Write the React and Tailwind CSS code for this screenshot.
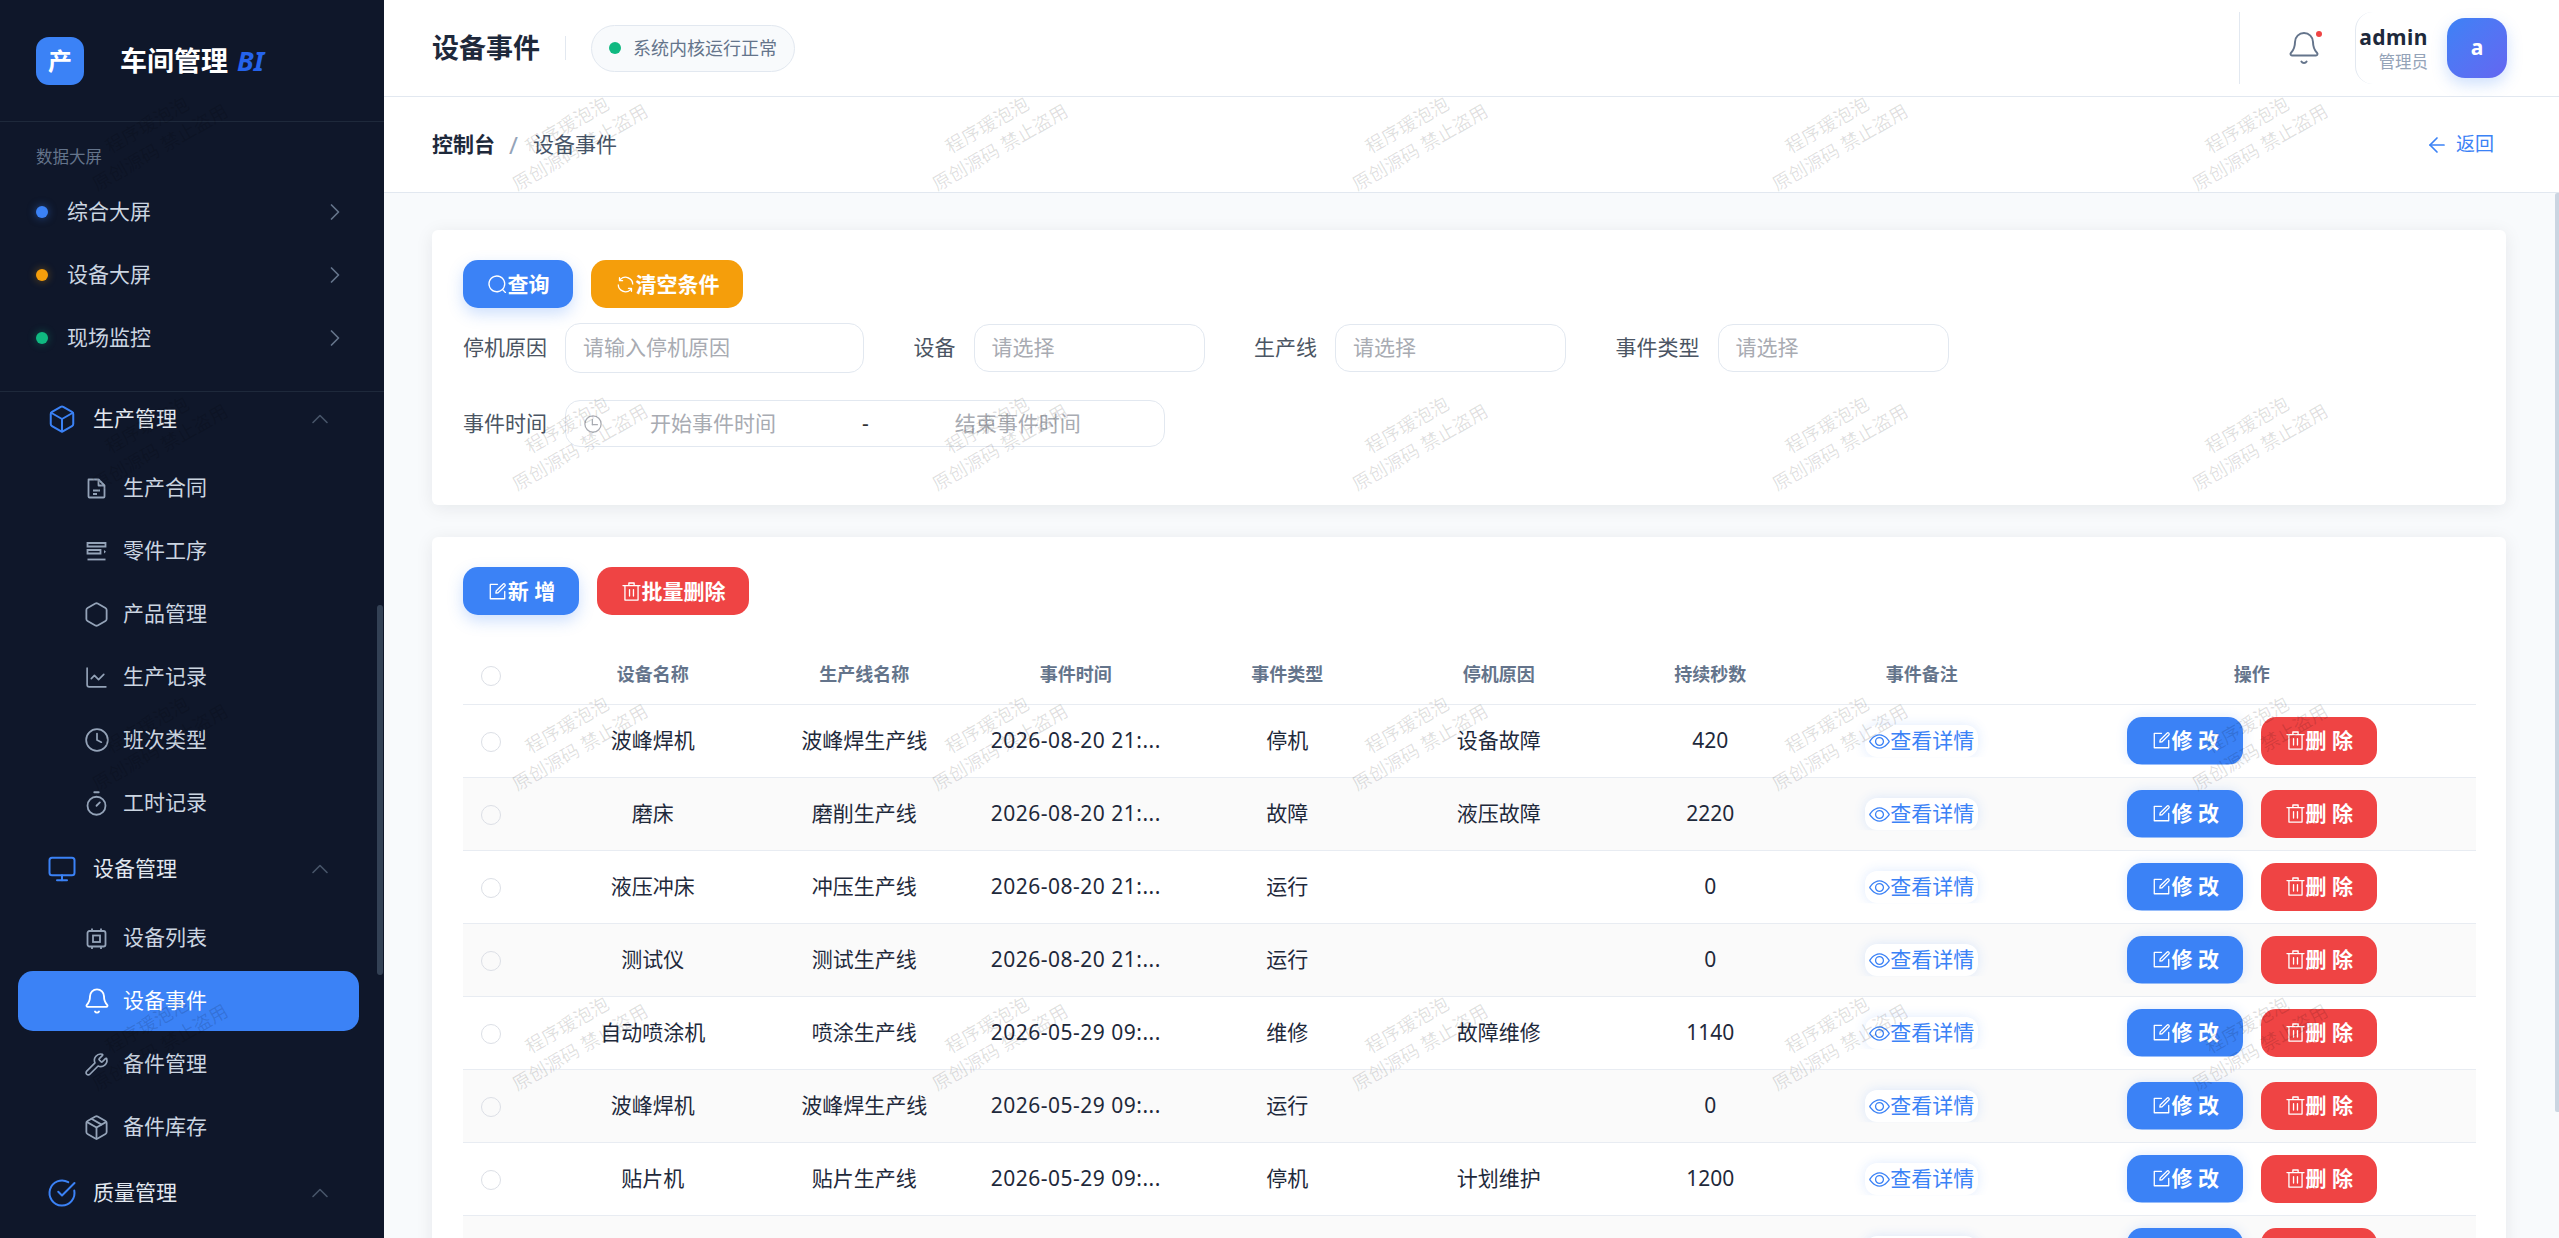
import {
  Box, Hexagon, ChartLine, Clock, Timer, Monitor, Bell, Wrench, Package,
  CircleCheckBig, ChevronRight, ChevronUp, ArrowLeft,
} from 'lucide-react';

// Element style icons, 1024 grid
const EP = ({ d, className }) => (
  <svg viewBox="0 0 1024 1024" fill="currentColor" className={className}>
    {d.map((p, i) => <path key={i} d={p} />)}
  </svg>
);
const searchPath = ['m795.904 750.72 124.992 124.928a32 32 0 0 1-45.248 45.248L750.656 795.904a416 416 0 1 1 45.248-45.248zM480 832a352 352 0 1 0 0-704 352 352 0 0 0 0 704z'];
const refreshPath = ['M771.776 794.88A384 384 0 0 1 128 512h64a320 320 0 0 0 555.712 216.448H654.72a32 32 0 1 1 0-64h149.056a32 32 0 0 1 32 32v148.928a32 32 0 1 1-64 0v-50.56zM276.288 295.616h92.992a32 32 0 0 1 0 64H220.16a32 32 0 0 1-32-32V178.56a32 32 0 0 1 64 0v50.56A384 384 0 0 1 896.128 512h-64a320 320 0 0 0-555.776-216.384z'];
const editPath = [
  'M832 512a32 32 0 1 1 64 0v352a32 32 0 0 1-32 32H160a32 32 0 0 1-32-32V160a32 32 0 0 1 32-32h352a32 32 0 0 1 0 64H192v640h640V512z',
  'm469.952 554.24 52.8-7.552L847.104 222.4a32 32 0 1 0-45.248-45.248L477.44 501.44l-7.552 52.8zm422.4-422.4a96 96 0 0 1 0 135.808l-331.84 331.84a32 32 0 0 1-18.112 9.088L436.8 623.68a32 32 0 0 1-36.224-36.224l15.104-105.6a32 32 0 0 1 9.024-18.112l331.904-331.84a96 96 0 0 1 135.744 0z',
];
const deletePath = ['M160 256H96a32 32 0 0 1 0-64h256V95.936a32 32 0 0 1 32-32h256a32 32 0 0 1 32 32V192h256a32 32 0 1 1 0 64h-64v672a32 32 0 0 1-32 32H192a32 32 0 0 1-32-32V256zm448-64v-64H416v64h192zM224 896h576V256H224v640zm192-128a32 32 0 0 1-32-32V416a32 32 0 0 1 64 0v320a32 32 0 0 1-32 32zm192 0a32 32 0 0 1-32-32V416a32 32 0 0 1 64 0v320a32 32 0 0 1-32 32z'];
const viewPath = ['M512 160c320 0 512 352 512 352S832 864 512 864 0 512 0 512s192-352 512-352zm0 64c-225.28 0-384.128 208.064-436.8 288 52.608 79.872 211.456 288 436.8 288 225.28 0 384.128-208.064 436.8-288-52.608-79.872-211.456-288-436.8-288zm0 64a224 224 0 1 1 0 448 224 224 0 0 1 0-448zm0 64a160.192 160.192 0 0 0-160 160c0 88.192 71.744 160 160 160s160-71.808 160-160-71.744-160-160-160z'];
const clockPath = [
  'M512 896a384 384 0 1 0 0-768 384 384 0 0 0 0 768zm0 64a448 448 0 1 1 0-896 448 448 0 0 1 0 896z',
  'M480 256a32 32 0 0 1 32 32v256a32 32 0 0 1-64 0V288a32 32 0 0 1 32-32z',
  'M480 512h256q32 0 32 32t-32 32H480q-32 0-32-32t32-32z',
];

// sidebar icons that lucide has no close match for
const DocIcon = ({ className }) => (
  <svg viewBox="0 0 21 21" fill="none" stroke="currentColor" strokeWidth="1.8" strokeLinejoin="round" className={className}>
    <path d="M2.5 1.5h10l6 6v11a1 1 0 0 1-1 1h-14a1 1 0 0 1-1-1v-16a1 1 0 0 1 1-1z" />
    <path d="M12.5 1.5v6h6" />
    <path d="M7 12.5h7M7 16h4" />
  </svg>
);
const StepsIcon = ({ className }) => (
  <svg viewBox="0 0 21 21" fill="none" stroke="currentColor" strokeWidth="1.8" className={className}>
    <path d="M1.5 2h18v3.5h-18z" />
    <path d="M1.5 9h13v3.5h-13z" />
    <path d="M1.5 18.5h18" />
    <path d="M18 9l2 1.7-2 1.7z" fill="currentColor" stroke="none" />
  </svg>
);
const ChipIcon = ({ className }) => (
  <svg viewBox="0 0 21 21" fill="none" stroke="currentColor" strokeWidth="1.8" className={className}>
    <rect x="1.5" y="3" width="18" height="15.5" rx="2" />
    <rect x="7" y="7.5" width="7" height="6.5" />
    <path d="M6 .5V3M15 .5V3M6 18.5V21M15 18.5V21" />
  </svg>
);

const groups = [
  {
    title: '生产管理', Icon: Box,
    items: [
      ['生产合同', DocIcon, 'w-[21px] h-[21px]'], ['零件工序', StepsIcon, 'w-[21px] h-[21px]'], ['产品管理', Hexagon, 'w-[27px] h-[27px]'],
      ['生产记录', ChartLine, 'w-[25px] h-[25px]'], ['班次类型', Clock, 'w-[26px] h-[26px]'], ['工时记录', Timer, 'w-[27px] h-[27px]'],
    ],
  },
  {
    title: '设备管理', Icon: Monitor,
    items: [
      ['设备列表', ChipIcon, 'w-[21px] h-[21px]'], ['设备事件', Bell, 'w-[28px] h-[28px]', true],
      ['备件管理', Wrench, 'w-[25px] h-[25px]'], ['备件库存', Package, 'w-[27px] h-[27px]'],
    ],
  },
  { title: '质量管理', Icon: CircleCheckBig, items: [] },
];

const rows = [
  ['波峰焊机', '波峰焊生产线', '2026-08-20 21:...', '停机', '设备故障', '420'],
  ['磨床', '磨削生产线', '2026-08-20 21:...', '故障', '液压故障', '2220'],
  ['液压冲床', '冲压生产线', '2026-08-20 21:...', '运行', '', '0'],
  ['测试仪', '测试生产线', '2026-08-20 21:...', '运行', '', '0'],
  ['自动喷涂机', '喷涂生产线', '2026-05-29 09:...', '维修', '故障维修', '1140'],
  ['波峰焊机', '波峰焊生产线', '2026-05-29 09:...', '运行', '', '0'],
  ['贴片机', '贴片生产线', '2026-05-29 09:...', '停机', '计划维护', '1200'],
  ['', '', '', '', '', ''],
];

const Btn = ({ icon, label, className }) => (
  <button className={`h-12 rounded-[15px] flex items-center justify-center text-white text-[21px] font-bold leading-none ${className}`}>
    <EP d={icon} className="w-[21px] h-[21px] shrink-0" />
    <span>{label}</span>
  </button>
);

const Field = ({ label, placeholder, width, height = 'h-12' }) => (
  <div className="flex items-center gap-[18px]">
    <span className="text-[21px] text-[#4b5563]">{label}</span>
    <div className={`${width} ${height} rounded-[15px] border border-[#e2e8f0] bg-white flex items-center pl-[17px] text-[21px] text-[#a8abb2]`}>
      {placeholder}
    </div>
  </div>
);

function Sidebar() {
  return (
    <aside className="relative w-[384px] h-full shrink-0 bg-[#0f172a] flex flex-col overflow-hidden">
      <div className="h-[122px] shrink-0 border-b border-[#1e293b] flex items-center pl-9">
        <div className="w-12 h-12 rounded-[13px] bg-[#3b82f6] flex items-center justify-center text-white text-[24px] font-bold">产</div>
        <div className="ml-9 mt-[2px] text-white text-[27px] font-bold">车间管理</div>
        <div className="ml-[9px] mt-[2px] text-[#2563eb] text-[27px] font-bold italic">BI</div>
      </div>
      <div className="h-[270px] shrink-0 border-b border-[#1e293b] pt-[23px]">
        <div className="pl-9 text-[16.5px] leading-6 text-[#64748b]">数据大屏</div>
        <div className="mt-[11px] flex flex-col">
          {[['综合大屏', 'bg-[#3b82f6] shadow-[0_0_9px_rgba(59,130,246,.5)]'], ['设备大屏', 'bg-[#f59e0b] shadow-[0_0_9px_rgba(245,158,11,.4)]'], ['现场监控', 'bg-[#10b981] shadow-[0_0_9px_rgba(16,185,129,.4)]']].map(([t, dot]) => (
            <div key={t} className="h-[63px] flex items-center pl-9 pr-[35px]">
              <span className={`w-3 h-3 rounded-full ${dot}`} />
              <span className="ml-[19px] text-[21px] text-[#cbd5e1]">{t}</span>
              <ChevronRight className="ml-auto w-7 h-7 text-[#64748b]" strokeWidth={1.5} />
            </div>
          ))}
        </div>
      </div>
      <nav className="flex-1 overflow-hidden pl-[18px] pr-[25px]">
        {groups.map(({ title, Icon, items }) => (
          <div key={title}>
            <div className="h-[54px] flex items-center pl-[31px] pr-[25px]">
              <span className="w-[25px] flex justify-center shrink-0">
                <Icon className="w-[30px] h-[30px] shrink-0 text-[#3b82f6]" strokeWidth={1.6} />
              </span>
              <span className="ml-[19px] text-[21px] text-[#e2e8f0]">{title}</span>
              <ChevronUp className="ml-auto w-7 h-7 text-[#475569]" strokeWidth={1.4} />
            </div>
            {items.length > 0 && (
              <div className="mt-[12px] mb-[9px] flex flex-col gap-[3px]">
                {items.map(([t, ItemIcon, size, active]) => (
                  <div key={t} className={`h-[60px] flex items-center pl-[68px] rounded-[15px] ${active ? 'bg-[#3b82f6] text-white' : 'text-[#cbd5e1]'}`}>
                    <span className="w-[21px] flex justify-center shrink-0">
                      <ItemIcon className={`${size} shrink-0 ${active ? 'text-white' : 'text-[#94a3b8]'}`} strokeWidth={1.6} />
                    </span>
                    <span className="ml-[16px] text-[21px]">{t}</span>
                  </div>
                ))}
              </div>
            )}
          </div>
        ))}
      </nav>
      {/* thin scrollbar thumb */}
      <div className="absolute left-[377px] top-[605px] w-[6px] h-[370px] rounded-full bg-[#334155]" />
    </aside>
  );
}

function Topbar() {
  return (
    <header className="h-[97px] shrink-0 bg-white border-b border-[#e2e8f0] flex items-center pl-12 pr-[52px]">
      <h1 className="text-[27px] font-bold text-[#1e293b]">设备事件</h1>
      <div className="ml-[25px] w-px h-6 bg-[#e2e8f0]" />
      <div className="ml-[25px] h-[47px] w-[204px] rounded-full bg-[#f8fafc] border border-[#e2e8f0] flex items-center pl-[17px]">
        <span className="w-3 h-3 rounded-full bg-[#10b981]" />
        <span className="ml-3 text-[18px] text-[#64748b]">系统内核运行正常</span>
      </div>
      <div className="ml-auto w-px h-[72px] bg-[#e2e8f0]" />
      <div className="relative ml-[46px] w-9 flex justify-center">
        <Bell className="w-9 h-9 text-[#64748b]" strokeWidth={1.3} />
        <span className="absolute right-0 top-[1px] w-[6px] h-[6px] rounded-full bg-[#ef4444]" />
      </div>
      <div className="ml-[33px] h-[72px] w-[73px] rounded-l-[18px] border-l border-[#e2e8f0] flex flex-col items-end justify-center">
        <div className="text-[21px] leading-[27px] font-bold text-[#1e293b] tracking-[0.5px]">admin</div>
        <div className="text-[16.5px] leading-[22px] text-[#94a3b8]">管理员</div>
      </div>
      <div className="ml-[19px] w-[60px] h-[60px] rounded-[18px] bg-gradient-to-br from-[#3b82f6] to-[#6366f1] flex items-center justify-center text-white font-bold text-[21px] shadow-[0_6px_15px_rgba(59,130,246,.25)]">a</div>
    </header>
  );
}

function Crumbs() {
  return (
    <div className="h-[96px] shrink-0 bg-white border-b border-[#e2e8f0] flex items-center pl-12 pr-[65px]">
      <span className="text-[21px] font-bold text-[#1e293b]">控制台</span>
      <span className="ml-[14px] text-[24px] text-[#94a3b8]">/</span>
      <span className="ml-[15px] text-[21px] text-[#475569]">设备事件</span>
      <div className="ml-auto flex items-center text-[#3b82f6]">
        <ArrowLeft className="w-6 h-6" strokeWidth={1.7} />
        <span className="ml-[7px] text-[19px]">返回</span>
      </div>
    </div>
  );
}

function Filters() {
  return (
    <section className="bg-white rounded-[6px] shadow-[0_3px_18px_rgba(15,23,42,.08)] h-[275px] pt-[30px] px-[31px]">
      <div className="flex gap-[18px]">
        <Btn icon={searchPath} label="查询" className="w-[110px] bg-[#3b82f6] shadow-[0_6px_15px_rgba(59,130,246,.25)]" />
        <Btn icon={refreshPath} label="清空条件" className="w-[152px] bg-[#f59e0b]" />
      </div>
      <div className="mt-[15px] flex items-center gap-[49.5px]">
        <Field label="停机原因" placeholder="请输入停机原因" width="w-[299px]" height="h-[50px]" />
        <Field label="设备" placeholder="请选择" width="w-[231px]" />
        <Field label="生产线" placeholder="请选择" width="w-[231px]" />
        <Field label="事件类型" placeholder="请选择" width="w-[231px]" />
      </div>
      <div className="mt-[27px] flex items-center gap-[18px]">
        <span className="text-[21px] text-[#4b5563]">事件时间</span>
        <div className="w-[600px] h-[47px] rounded-[15px] border border-[#e2e8f0] flex items-center pl-[17px] text-[21px] text-[#a8abb2]">
          <EP d={clockPath} className="w-5 h-5 text-[#a8abb2] shrink-0" />
          <span className="ml-[47px]">开始事件时间</span>
          <span className="ml-[86px] text-[#303133]">-</span>
          <span className="ml-[86px]">结束事件时间</span>
        </div>
      </div>
    </section>
  );
}

function EventsTable() {
  return (
    <section className="mt-8 bg-white rounded-[6px] shadow-[0_3px_18px_rgba(15,23,42,.08)] pt-[30px] px-[31px]">
      <div className="flex gap-[18px]">
        <Btn icon={editPath} label="新 增" className="w-[116px] bg-[#3b82f6] shadow-[0_6px_15px_rgba(59,130,246,.25)]" />
        <Btn icon={deletePath} label="批量删除" className="w-[152px] bg-[#ef4444]" />
      </div>
      <table className="mt-[31px] w-[2013px] table-fixed border-collapse text-center">
        <colgroup>
          <col className="w-[84px]" />
          <col className="w-[211.5px]" />
          <col className="w-[211.5px]" />
          <col className="w-[211.5px]" />
          <col className="w-[211.5px]" />
          <col className="w-[211.5px]" />
          <col className="w-[211.5px]" />
          <col className="w-[211.5px]" />
          <col />
        </colgroup>
        <thead>
          <tr className="h-[58px] border-b border-[#e8ecf2] text-[18px] text-[#64748b]">
            <th className="text-left pl-[18px]"><span className="inline-block align-middle w-5 h-5 rounded-full border border-[#dcdfe6]" /></th>
            {['设备名称', '生产线名称', '事件时间', '事件类型', '停机原因', '持续秒数', '事件备注', '操作'].map(h => (
              <th key={h} className="font-bold whitespace-nowrap">{h}</th>
            ))}
          </tr>
        </thead>
        <tbody>
          {rows.map((r, i) => (
            <tr key={i} className={`h-[73px] border-b border-[#e8ecf2] text-[21px] text-[#1e293b] ${i % 2 ? 'bg-[#fafafa]' : 'bg-white'}`}>
              <td className="text-left pl-[18px]"><span className="inline-block align-middle w-5 h-5 rounded-full border border-[#dcdfe6]" /></td>
              {r.map((c, j) => <td key={j} className={`whitespace-nowrap ${j === 2 ? 'tracking-[0.5px]' : ''}`}>{c}</td>)}
              <td className="whitespace-nowrap">
                <span className="inline-flex align-middle items-center h-8 px-[4px] rounded-[12px] bg-white text-[#3b82f6] shadow-[0_0_12px_rgba(59,130,246,.16)] [clip-path:inset(-15px_-15px_0_-15px)]">
                  <EP d={viewPath} className="w-[21px] h-[21px]" />
                  查看详情
                </span>
              </td>
              <td>
                <div className="flex justify-center gap-[18px]">
                  <Btn icon={editPath} label="修 改" className="w-[116px] bg-[#3b82f6] shadow-[0_0_12px_rgba(59,130,246,.16)] [clip-path:inset(-15px_-15px_0_-15px)]" />
                  <Btn icon={deletePath} label="删 除" className="w-[116px] bg-[#ef4444]" />
                </div>
              </td>
            </tr>
          ))}
        </tbody>
      </table>
    </section>
  );
}

// repeating watermark over the whole page
function Watermark() {
  const tiles = Array.from({ length: 35 });
  return (
    <div className="absolute inset-0 overflow-hidden pointer-events-none">
      <div className="grid grid-cols-[repeat(7,420px)] auto-rows-[300px] w-[2940px] -ml-[57px] -mt-[14px]">
        {tiles.map((_, i) => (
          <div key={i} className="flex items-center justify-center">
            <div className="-rotate-[30deg] text-center text-[18.5px] leading-[26px] text-black/[.13] whitespace-nowrap">
              <div>程序瑗泡泡</div>
              <div>原创源码 禁止盗用</div>
            </div>
          </div>
        ))}
      </div>
    </div>
  );
}

export default function App() {
  return (
    <div className="relative w-[2559px] h-[1238px] overflow-hidden flex [font-family:'Noto_Sans','Noto_Sans_CJK_SC',sans-serif]">
      <Sidebar />
      <main className="flex-1 min-w-0 flex flex-col bg-white">
        <Topbar />
        <Crumbs />
        <div className="flex-1 min-h-0 flex bg-[#f8fafc]">
          <div className="flex-1 min-w-0 overflow-hidden pt-[37px] pl-12 pr-[49px]">
            <Filters />
            <EventsTable />
          </div>
          <div className="w-1 shrink-0">
            <div className="h-[919px] rounded-l-[2px] bg-[#cbd5e1]" />
          </div>
        </div>
      </main>
      <Watermark />
    </div>
  );
}
